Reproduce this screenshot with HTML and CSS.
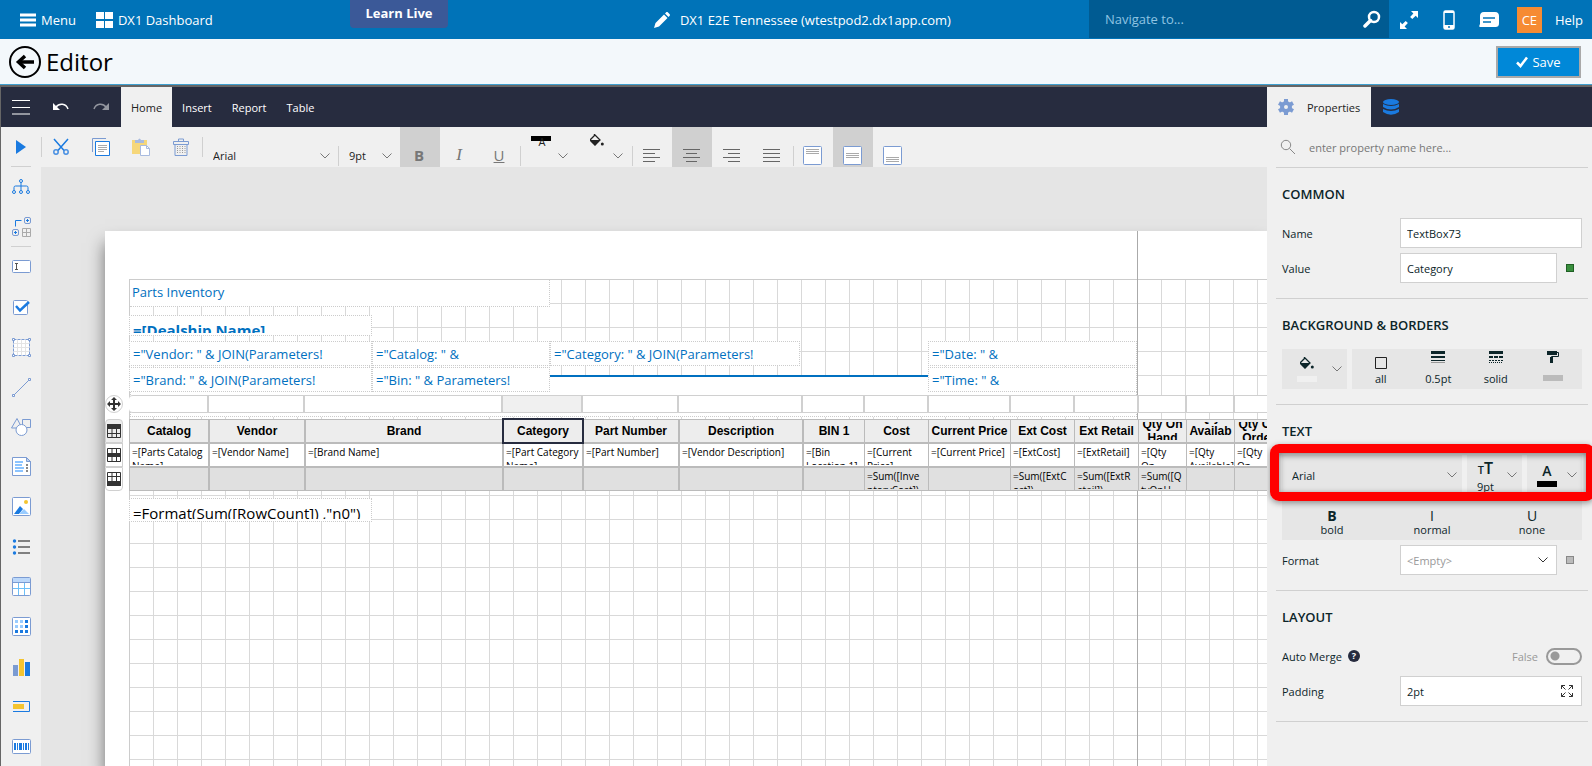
FILE: index.html
```html
<!DOCTYPE html>
<html lang="en">
<head>
    <meta charset="UTF-8">
    <meta name="viewport" content="width=device-width, initial-scale=1.0">
    <title>Editor</title>
    <link rel="stylesheet" href="styles.css">
</head>
<body>
    <header class="topbar">
        <nav class="top-left">
            <a class="top-link" href="#">
                <svg width="16" height="14" viewBox="0 0 16 14"><path d="M0 2h16M0 7h16M0 12h16" stroke="#fff" stroke-width="3"/></svg>
                Menu
            </a>
            <a class="top-link" href="#">
                <svg width="17" height="16" viewBox="0 0 17 16" fill="#fff"><path d="M0 0h8v7H0zM9 0h8v7H9zM0 9h8v7H0zM9 9h8v7H9z"/></svg>
                DX1 Dashboard
            </a>
        </nav>
        <a class="learn" href="#">Learn Live</a>
        <a class="tenant" href="#">
            <svg width="16" height="16" viewBox="0 0 16 16" fill="#fff"><path d="M0 16l1.500-5L10 2.500 13.500 6 5 14.500zM11 1.500l1-1c.7-.7 1.500-.5 2 0L15.500 2c.6.6.6 1.300 0 2l-1 1z"/></svg>
            DX1 E2E Tennessee (wtestpod2.dx1app.com)
        </a>
        <div class="top-right">
            <label class="navigate">
                <input type="text" placeholder="Navigate to..." aria-label="Navigate to">
                <svg width="18" height="18" viewBox="0 0 18 18" fill="none" stroke="#fff"><circle cx="11" cy="7" r="5" stroke-width="2.500"/><path d="M7.500 10.500L2 16" stroke-width="3.500" stroke-linecap="round"/></svg>
            </label>
            <button class="top-icon" aria-label="Full screen"><svg width="20" height="20" viewBox="0 0 20 20" fill="#fff"><path d="M12 1h7v7l-2.300-2.300-3.400 3.400-2.200-2.200 3.300-3.400zM1 12l2.300 2.300 3.400-3.400 2.200 2.200-3.300 3.400L8 19H1z"/></svg></button>
            <button class="top-icon" aria-label="Mobile"><svg width="12" height="20" viewBox="0 0 12 20"><rect x="1" y="1" width="10" height="18" rx="1.500" fill="none" stroke="#fff" stroke-width="1.500"/><path d="M1 15h10v4H1zM1 1h10v2H1z" fill="#fff"/><circle cx="6" cy="17" r="1" fill="#0073b8"/></svg></button>
            <button class="top-icon" aria-label="Messages"><svg width="20" height="16" viewBox="0 0 20 16"><path d="M5 0h11c3 0 4 2 4 4v7c0 3-1 4-4 4H1c-1 0-1-1 0-3V4c0-2 1-4 4-4z" fill="#fff"/><path d="M4 6h12M4 10h8" stroke="#0073b8" stroke-width="1.500"/></svg></button>
            <span class="avatar">CE</span>
            <a href="#">Help</a>
        </div>
    </header>

    <div class="titlebar">
        <a class="back" href="#" aria-label="Back"><svg width="32" height="32" viewBox="0 0 32 32" fill="none" stroke="#000"><circle cx="16" cy="16" r="15" stroke-width="2"/><path d="M9 16h16" stroke-width="3.500"/><path d="M16 10l-6.500 6 6.500 6" stroke-width="3.500"/></svg></a>
        <h1>Editor</h1>
        <button class="save"><svg width="12" height="12" viewBox="0 0 12 12"><path d="M1 6.500L4.500 10 11 1.500" fill="none" stroke="#fff" stroke-width="2.500"/></svg>Save</button>
    </div>

    <div class="designer">
        <main class="main">
            <nav class="tabs">
                <button class="tab-icon" aria-label="Open menu"><svg width="18" height="16" viewBox="0 0 18 16"><path d="M0 1.500h18M0 8.500h18M0 15h18" stroke="#fff"/></svg></button>
                <button class="tab-icon" aria-label="Undo"><svg width="16" height="10" viewBox="0 0 16 10"><path d="M0 1v7h7z" fill="#fff"/><path d="M3 5c3-4 10-4 12 2" fill="none" stroke="#fff" stroke-width="1.500"/></svg></button>
                <button class="tab-icon dim" aria-label="Redo"><svg width="16" height="10" viewBox="0 0 16 10"><path d="M16 1v7H9z" fill="#fff"/><path d="M13 5C10 1 3 1 1 7" fill="none" stroke="#fff" stroke-width="1.500"/></svg></button>
                <button class="tab active">Home</button>
                <button class="tab">Insert</button>
                <button class="tab">Report</button>
                <button class="tab">Table</button>
            </nav>
            <div class="workspace">
                <aside class="toolbox">
                    <button class="tool ruled" aria-label="Preview"><svg width="10" height="14" viewBox="0 0 10 14"><path d="M0 0l10 7-10 7z" fill="#1a7ae0"/></svg></button>
                    <button class="tool" aria-label="Explorer"><svg width="20" height="18" viewBox="0 0 20 18" fill="none" stroke="#1a7ae0"><circle cx="10" cy="3" r="1.500"/><circle cx="3" cy="14" r="1.500"/><circle cx="10" cy="14" r="1.500"/><circle cx="17" cy="14" r="1.500"/><path d="M10 4.500v8M3 12.500v-3q0-1.500 1.500-1.500h11q1.500 0 1.500 1.500v3"/></svg></button>
                    <button class="tool ruled" aria-label="Group editor"><svg width="20" height="20" viewBox="0 0 20 20" fill="none" stroke="#7b9bd2"><path d="M4.500 9.500v-6h6" stroke="#1a7ae0"/><rect x="13.500" y=".5" width="6" height="6" rx="1.500"/><rect x="1.500" y="12.500" width="6" height="6" rx="1.500"/><path d="M15 3.500h3M16.500 2v3M3 15.500h3M4.500 14v3" stroke="#1a7ae0"/><path d="M11.500 11.500h8v8h-8zM15.500 11.500v8M11.500 15.500h8" stroke="#aaa"/></svg></button>
                    <button class="tool" aria-label="Text box"><svg width="20" height="14" viewBox="0 0 20 14"><rect x="1.500" y=".5" width="18" height="12" rx="1" fill="#fff" stroke="#7b9bd2"/><path d="M4 3.500h3M5.500 3.500v6M4 9.500h3" stroke="#555"/></svg></button>
                    <button class="tool" aria-label="Check box"><svg width="18" height="16" viewBox="0 0 18 16"><rect x="1.500" y="1.500" width="14" height="14" rx="1" fill="#fff" stroke="#7b9bd2"/><path d="M4 7l4 4.500L17 3" fill="none" stroke="#1a7ae0" stroke-width="2.500"/></svg></button>
                    <button class="tool" aria-label="Container"><svg width="20" height="20" viewBox="0 0 20 20" fill="#fff" stroke="#7b9bd2"><path d="M2.500 2.500h16v16h-16z" stroke-dasharray="3 1"/><path d="M6.500 3v15M10.500 3v15M14.500 3v15M3 6.500h15M3 10.500h15M3 14.500h15" stroke="#e4e4e4"/><path d="M1.500 1.500h2v2h-2zM17.500 1.500h2v2h-2zM1.500 17.500h2v2h-2zM17.500 17.500h2v2h-2z"/></svg></button>
                    <button class="tool" aria-label="Line"><svg width="20" height="20" viewBox="0 0 20 20" fill="#fff" stroke="#7b9bd2"><path d="M2.500 18.500l16-16"/><path d="M17.500 1.500h2v2h-2zM1.500 17.500h2v2h-2z"/></svg></button>
                    <button class="tool" aria-label="Shape"><svg width="20" height="20" viewBox="0 0 20 20" fill="#f0f0f0" stroke="#7b9bd2"><path d="M.5 11L6 1.500l5 9.500zM11.500 2.500h8v8h-8z"/><circle cx="10.500" cy="13" r="5.500" fill="#fff"/></svg></button>
                    <button class="tool" aria-label="Rich text"><svg width="20" height="20" viewBox="0 0 20 20"><path d="M1.500 .5H15l4.500 4v14h-18z" fill="#fff" stroke="#7b9bd2"/><path d="M15.500 .5v4h4z" fill="#bcd0f0" stroke="#7b9bd2"/><path d="M4 5h8M4 8h7M4 11h9M4 14h8" stroke="#8cc4ff" stroke-width="2"/><path d="M15 8h2M15 11h2M15 14h2" stroke="#888" stroke-width="2"/></svg></button>
                    <button class="tool" aria-label="Image"><svg width="20" height="20" viewBox="0 0 20 20"><rect x="1.500" y=".5" width="18" height="18" rx="1" fill="#fff" stroke="#7b9bd2"/><path d="M3 17l6-8 3 3-4 5z" fill="#1a7ae0"/><path d="M8 17l5-5 5 5z" fill="#99ccff"/><circle cx="15" cy="5" r="2" fill="#f4c430"/></svg></button>
                    <button class="tool" aria-label="List"><svg width="20" height="18" viewBox="0 0 20 18"><path d="M7 3h12M7 9h12M7 15h12" stroke="#808080" stroke-width="2"/><g fill="#1a7ae0"><circle cx="3.500" cy="3" r="1.700"/><circle cx="3.500" cy="9" r="1.700"/><circle cx="3.500" cy="15" r="1.700"/></g></svg></button>
                    <button class="tool" aria-label="Table"><svg width="20" height="20" viewBox="0 0 20 20"><rect x="1.500" y=".5" width="18" height="18" rx="1" fill="#fff" stroke="#7b9bd2"/><path d="M2 1h17v4H2z" fill="#bcd8fa"/><path d="M2 5.500h17" stroke="#7b9bd2"/><path d="M7.500 6v12M13.500 6v12M2 11.500h17" stroke="#6cc0f8"/></svg></button>
                    <button class="tool" aria-label="Tablix"><svg width="20" height="20" viewBox="0 0 20 20"><rect x="1.500" y=".5" width="18" height="18" rx="1" fill="#fff" stroke="#7b9bd2"/><path d="M4 4.500h3M9 4.500h3M4 9.500h3M9 9.500h3" stroke="#99ccff" stroke-width="3"/><path d="M14 4.500h3M14 9.500h3M4 14.500h3M9 14.500h3M14 14.500h3" stroke="#1a7ae0" stroke-width="3"/></svg></button>
                    <button class="tool" aria-label="Chart"><svg width="18" height="18" viewBox="0 0 18 18"><path d="M1 7h5v11H1z" fill="#7b9bd2"/><path d="M7 1h5v17H7z" fill="#f4c430"/><path d="M13 4h5v14h-5z" fill="#1a7ae0"/></svg></button>
                    <button class="tool" aria-label="Bullet"><svg width="18" height="12" viewBox="0 0 18 12"><path d="M1 .5h16.500v10H1" fill="none" stroke="#1a7ae0"/><path d="M1 3h11v5H1z" fill="#f4c430"/></svg></button>
                    <button class="tool" aria-label="Barcode"><svg width="20" height="16" viewBox="0 0 20 16"><rect x="1.500" y=".5" width="18" height="14" rx="1" fill="#fff" stroke="#7b9bd2"/><path d="M4 4v7M10 4v7M15 4v7" stroke="#1a7ae0" stroke-width="2"/><path d="M6.500 4v7M8.500 4v7M12.500 4v7M17.500 4v7" stroke="#1a7ae0"/></svg></button>
                </aside>
                <div class="stage">
                    <div class="toolbar">
                        <div class="group edit">
                            <button class="tool" aria-label="Cut"><svg width="18" height="18" viewBox="0 0 18 18" fill="none" stroke="#1a7ae0" stroke-width="1.500"><path d="M2 1l10.500 12M16 1L5.500 13"/><circle cx="4" cy="14" r="2.200" stroke="#4a90e2"/><circle cx="14" cy="14" r="2.200" stroke="#4a90e2"/></svg></button>
                            <button class="tool" aria-label="Copy"><svg width="18" height="18" viewBox="0 0 18 18" fill="none" stroke="#7b9bd2"><path d="M.5 14V.5H14"/><path d="M3.500 3.500h14v14h-14z" fill="#fff" stroke="#1a7ae0"/><path d="M6 7.500h9M6 9.500h9M6 11.500h9M6 13.500h6" stroke="#aaa"/></svg></button>
                            <button class="tool" aria-label="Paste"><svg width="18" height="20" viewBox="0 0 18 20"><path d="M0 3h15v14H0z" fill="#f6d77a"/><path d="M3 3h3q1.500-3 3 0h3v3H3z" fill="#a9bbdf"/><path d="M8.500 8.500h6l3 3v7h-9z" fill="#fff" stroke="#a9bbdf"/><path d="M14.500 8.500v3h3" fill="none" stroke="#a9bbdf"/></svg></button>
                            <button class="tool" aria-label="Delete"><svg width="16" height="18" viewBox="0 0 16 18" fill="none" stroke="#7b9bd2"><path d="M.5 3.500h15v3H.5zM5.500 3V1h5v2M2 6.500v11h12v-11"/><path d="M4.500 8v8M7 8v8M9.500 8v8M12 8v8" stroke="#999" stroke-dasharray="1 1"/></svg></button>
                        </div>
                        <div class="group font-name low">
                            <select aria-label="Font"><option>Arial</option></select>
                            <svg class="chevron" width="10" height="6" viewBox="0 0 10 6"><path d="M.5 .5L5 5 9.500 .5"/></svg>
                        </div>
                        <div class="group font-size low">
                            <select aria-label="Font size"><option>9pt</option></select>
                            <svg class="chevron" width="10" height="6" viewBox="0 0 10 6"><path d="M.5 .5L5 5 9.500 .5"/></svg>
                        </div>
                        <div class="group low">
                            <button class="tool letter on"><b>B</b></button>
                            <button class="tool letter"><i>I</i></button>
                            <button class="tool letter"><u>U</u></button>
                        </div>
                        <div class="group low colors">
                            <button class="color-tool" aria-label="Text color"><span class="ink"></span><span class="ink-letter">A</span></button>
                            <svg class="chevron" width="10" height="6" viewBox="0 0 10 6"><path d="M.5 .5L5 5 9.500 .5"/></svg>
                            <button class="color-tool bucket" aria-label="Background color"><svg width="14" height="12" viewBox="0 0 14 12"><path d="M4 0l6 6-5 5-5-5 5-5" fill="none" stroke="#222" stroke-width="1.300"/><path d="M0 6h10l-5 5.500z" fill="#222"/><circle cx="12.300" cy="10" r="1.500" fill="#222"/></svg></button>
                            <svg class="chevron" width="10" height="6" viewBox="0 0 10 6"><path d="M.5 .5L5 5 9.500 .5"/></svg>
                        </div>
                        <div class="group low aligns">
                            <button class="tool" aria-label="Align left"><svg width="18" height="14" viewBox="0 0 18 14" stroke="#666"><path d="M0 .5h17M0 4.500h12M0 8.500h17M0 12.500h12"/></svg></button>
                            <button class="tool on" aria-label="Align center"><svg width="18" height="14" viewBox="0 0 18 14" stroke="#666"><path d="M0 .5h17M3 4.500h11M0 8.500h17M3 12.500h11"/></svg></button>
                            <button class="tool" aria-label="Align right"><svg width="18" height="14" viewBox="0 0 18 14" stroke="#666"><path d="M0 .5h17M5 4.500h12M0 8.500h17M5 12.500h12"/></svg></button>
                            <button class="tool" aria-label="Justify"><svg width="18" height="14" viewBox="0 0 18 14" stroke="#666"><path d="M0 .5h17M0 4.500h17M0 8.500h17M0 12.500h17"/></svg></button>
                        </div>
                        <div class="group low">
                            <button class="tool" aria-label="Align top"><svg width="20" height="20" viewBox="0 0 20 20"><rect x=".5" y=".5" width="18" height="18" rx="1" fill="#fff" stroke="#7b9bd2"/><path d="M3 3.500h13M3 5.500h13M3 7.500h13" stroke="#aaa"/></svg></button>
                            <button class="tool on" aria-label="Align middle"><svg width="20" height="20" viewBox="0 0 20 20"><rect x=".5" y=".5" width="18" height="18" rx="1" fill="#fff" stroke="#7b9bd2"/><path d="M3 7.500h13M3 9.500h13M3 11.500h13" stroke="#aaa"/></svg></button>
                            <button class="tool" aria-label="Align bottom"><svg width="20" height="20" viewBox="0 0 20 20"><rect x=".5" y=".5" width="18" height="18" rx="1" fill="#fff" stroke="#7b9bd2"/><path d="M3 11.500h13M3 13.500h13M3 15.500h13" stroke="#aaa"/></svg></button>
                        </div>
                    </div>
                    <div class="canvas">
                        <div class="sheet">
                            <div class="margin-line"></div>
                            <div class="grid">
                                <div class="box title">Parts Inventory</div>
                                <div class="box dealer"><div>=[Dealship Name]</div></div>
                                <div class="box row1 c1">="Vendor: " &amp; JOIN(Parameters!</div>
                                <div class="box row1 c2">="Catalog: " &amp;</div>
                                <div class="box row1 c3">="Category: " &amp; JOIN(Parameters!</div>
                                <div class="box row1 c4">="Date: " &amp;</div>
                                <div class="backing"></div>
                                <div class="rule"></div>
                                <div class="box row2 c1">="Brand: " &amp; JOIN(Parameters!</div>
                                <div class="box row2 c2">="Bin: " &amp; Parameters!</div>
                                <div class="box row2 c4">="Time: " &amp;</div>
                                <div class="box count"><div>=Format(Sum([RowCount]) ,"n0")</div></div>

                                <div class="tablix">
                                    <div class="col-handles">
                                        <span class="w80"></span><span class="w96"></span><span class="w198"></span><span class="w80 picked"></span><span class="w96"></span><span class="w124"></span><span class="w62"></span><span class="w64"></span><span class="w82"></span><span class="w64"></span><span class="w64"></span><span class="w48"></span><span class="w48"></span>
                                    </div>
                                    <table>
                                        <colgroup>
                                            <col class="w80"><col class="w96"><col class="w198"><col class="w80"><col class="w96"><col class="w124"><col class="w62"><col class="w64"><col class="w82"><col class="w64"><col class="w64"><col class="w48"><col class="w48"><col class="w48">
                                        </colgroup>
                                        <thead>
                                            <tr>
                                                <th><div>Catalog</div></th>
                                                <th><div>Vendor</div></th>
                                                <th><div>Brand</div></th>
                                                <th class="selected"><div>Category</div></th>
                                                <th><div>Part Number</div></th>
                                                <th><div>Description</div></th>
                                                <th><div>BIN 1</div></th>
                                                <th><div>Cost</div></th>
                                                <th><div>Current Price</div></th>
                                                <th><div>Ext Cost</div></th>
                                                <th><div>Ext Retail</div></th>
                                                <th><div>Qty On<br>Hand</div></th>
                                                <th><div>Qty<br>Availab<br>le</div></th>
                                                <th><div>Qty On<br>Order</div></th>
                                            </tr>
                                        </thead>
                                        <tbody>
                                            <tr>
                                                <td><div>=[Parts Catalog<br>Name]</div></td>
                                                <td><div>=[Vendor Name]</div></td>
                                                <td><div>=[Brand Name]</div></td>
                                                <td><div>=[Part Category<br>Name]</div></td>
                                                <td><div>=[Part Number]</div></td>
                                                <td><div>=[Vendor Description]</div></td>
                                                <td><div>=[Bin<br>Location 1]</div></td>
                                                <td><div>=[Current<br>Price]</div></td>
                                                <td><div>=[Current Price]</div></td>
                                                <td><div>=[ExtCost]</div></td>
                                                <td><div>=[ExtRetail]</div></td>
                                                <td><div>=[Qty<br>On</div></td>
                                                <td><div>=[Qty<br>Available]</div></td>
                                                <td><div>=[Qty<br>On</div></td>
                                            </tr>
                                        </tbody>
                                        <tfoot>
                                            <tr>
                                                <td></td><td></td><td></td><td></td><td></td><td></td><td></td>
                                                <td><div>=Sum([Inve<br>ntoryCost])</div></td>
                                                <td></td>
                                                <td><div>=Sum([ExtC<br>ost])</div></td>
                                                <td><div>=Sum([ExtR<br>etail])</div></td>
                                                <td><div>=Sum([Q<br>tyOnH</div></td>
                                                <td></td><td></td>
                                            </tr>
                                        </tfoot>
                                    </table>
                                </div>
                                <div class="row-handles">
                                    <button class="move" aria-label="Move"><svg width="14" height="14" viewBox="0 0 14 14" fill="#333"><path d="M6 3h2v3h3V4l3 3-3 3V8H8v3h2l-3 3-3-3h2V8H3v2L0 7l3-3v2h3V3H4l3-3 3 3z"/></svg></button>
                                    <button aria-label="Header row"><svg width="14" height="14" viewBox="0 0 14 14"><path d="M0 0h14v5H0z" fill="#333"/><path d="M.5 5v8.500h13V5M5 5v8M9.500 5v8M0 9.500h14" fill="none" stroke="#333"/></svg></button>
                                    <button aria-label="Detail row"><svg width="14" height="14" viewBox="0 0 14 14"><path d="M0 5h14v4H0z" fill="#333"/><path d="M.5 .5h13v13H.5zM5 0v14M9.500 0v14" fill="none" stroke="#333"/></svg></button>
                                    <button aria-label="Footer row"><svg width="14" height="14" viewBox="0 0 14 14"><path d="M0 9h14v5H0z" fill="#333"/><path d="M.5 9V.5h13V9M5 0v9M9.500 0v9M0 4.500h14" fill="none" stroke="#333"/></svg></button>
                                </div>
                            </div>
                        </div>
                    </div>
                </div>
            </div>
        </main>

        <aside class="panel">
            <nav class="tabs">
                <button class="tab active props"><svg width="16" height="16" viewBox="0 0 16 16"><circle cx="8" cy="8" r="4" fill="none" stroke="#7b9bd2" stroke-width="4"/><path d="M8 0v3M8 13v3M1 4l2.700 1.500M12.300 10.500L15 12M1 12l2.700-1.500M12.300 5.500L15 4" stroke="#7b9bd2" stroke-width="4"/></svg>Properties</button>
                <button class="tab-icon" aria-label="Data"><svg width="16" height="16" viewBox="0 0 16 16" fill="#1a7ae0"><ellipse cx="8" cy="3" rx="8" ry="3"/><path d="M0 5q8 4 16 0v3q-8 5-16 0zM0 10q8 4 16 0v3q-8 5.500-16 0z"/></svg></button>
            </nav>
            <label class="filter">
                <svg width="16" height="16" viewBox="0 0 16 16" fill="none" stroke="#888"><circle cx="6" cy="6" r="4.700"/><path d="M9.500 9.500L15 15"/></svg>
                <input type="text" placeholder="enter property name here..." aria-label="Property name">
            </label>

            <section>
                <h2>COMMON</h2>
                <div class="field">
                    <label for="name">Name</label>
                    <input id="name" type="text" value="TextBox73">
                </div>
                <div class="field">
                    <label for="value">Value</label>
                    <input id="value" type="text" value="Category">
                    <button class="marker green" aria-label="Value options"></button>
                </div>
            </section>

            <section>
                <h2>BACKGROUND &amp; BORDERS</h2>
                <div class="buttons">
                    <button class="pad fill">
                        <span class="stack"><svg width="14" height="12" viewBox="0 0 14 12"><path d="M4 0l6 6-5 5-5-5 5-5" fill="none" stroke="#0c2529" stroke-width="1.300"/><path d="M0 6h10l-5 5.500z" fill="#0c2529"/><circle cx="12.300" cy="10" r="1.500" fill="#0c2529"/></svg><span class="swatch light"></span></span>
                        <svg class="chevron" width="10" height="6" viewBox="0 0 10 6"><path d="M.5 .5L5 5 9.500 .5"/></svg>
                    </button>
                    <div class="pad wide borders">
                        <button class="all"><svg width="12" height="12" viewBox="0 0 12 12"><path d="M.5 .5h11v11H.5z" fill="none" stroke="#222"/></svg>all</button>
                        <button><svg width="14" height="12" viewBox="0 0 14 12" stroke="#0c2529"><path d="M0 1.500h14" stroke-width="3"/><path d="M0 6h14" stroke-width="2"/><path d="M0 9.500h14"/><path d="M0 11.500h14" stroke="#999"/></svg>0.5pt</button>
                        <button><svg width="14" height="12" viewBox="0 0 14 12" stroke="#0c2529"><path d="M0 1.500h14" stroke-width="3"/><path d="M0 6h14" stroke-width="2" stroke-dasharray="4 1"/><path d="M0 9.500h14" stroke-dasharray="2 1"/><path d="M0 11.500h14" stroke-dasharray="1 1"/></svg>solid</button>
                        <button aria-label="Border color"><svg width="12" height="12" viewBox="0 0 12 12"><path d="M0 0h10v4H0zM3 6h3v6H3z" fill="#0c2529"/><path d="M10 1.500h1.500v4h-7V8" fill="none" stroke="#0c2529"/></svg><span class="swatch grey"></span></button>
                    </div>
                </div>
            </section>

            <section class="text-section">
                <h2>TEXT</h2>
                <div class="buttons">
                    <div class="pad family">
                        <select aria-label="Font family"><option>Arial</option></select>
                        <svg class="chevron" width="10" height="6" viewBox="0 0 10 6"><path d="M.5 .5L5 5 9.500 .5"/></svg>
                    </div>
                    <button class="pad small">
                        <span class="stack"><span class="tt"><small>T</small>T</span><span>9pt</span></span>
                        <svg class="chevron" width="10" height="6" viewBox="0 0 10 6"><path d="M.5 .5L5 5 9.500 .5"/></svg>
                    </button>
                    <button class="pad small">
                        <span class="stack"><span class="cap">A</span><span class="swatch black"></span></span>
                        <svg class="chevron" width="10" height="6" viewBox="0 0 10 6"><path d="M.5 .5L5 5 9.500 .5"/></svg>
                    </button>
                </div>
                <div class="buttons">
                    <div class="pad wide styles">
                        <button><b>B</b>bold</button>
                        <button><span>I</span>normal</button>
                        <button><span>U</span>none</button>
                    </div>
                </div>
                <div class="field">
                    <label for="format">Format</label>
                    <div class="combo">
                        <select id="format"><option>&lt;Empty&gt;</option></select>
                        <svg class="chevron" width="10" height="6" viewBox="0 0 10 6"><path d="M.5 .5L5 5 9.500 .5"/></svg>
                    </div>
                    <button class="marker" aria-label="Format options"></button>
                </div>
                <div class="highlight"></div>
            </section>

            <section>
                <h2>LAYOUT</h2>
                <div class="field">
                    <label class="merge" for="merge">Auto Merge <span class="help">?</span></label>
                    <span class="state">False</span>
                    <input id="merge" class="toggle" type="checkbox">
                </div>
                <div class="field">
                    <label for="padding">Padding</label>
                    <div class="combo">
                        <input id="padding" type="text" value="2pt">
                        <svg class="expand" width="12" height="12" viewBox="0 0 12 12" fill="none"><path d="M.5 4V.5H4M8 .5h3.500V4M11.500 8v3.500H8M4 11.500H.5V8M.5 .5l4 4M11.500 .5l-4 4M11.500 11.500l-4-4M.5 11.500l4-4"/></svg>
                    </div>
                </div>
            </section>
        </aside>
    </div>
</body>
</html>
```
FILE: styles.css
```css
* {
    box-sizing: border-box;
}
body {
    font-family: "Open Sans", sans-serif;
    font-size: 11px;
    color: #222;
    margin: 0;
    height: 100vh;
    display: flex;
    flex-direction: column;
    overflow: hidden;
}
button, input, select {
    font: inherit;
    color: inherit;
    background: none;
    border: 0;
    border-radius: 0;
    margin: 0;
    padding: 0;
    outline: none;
    appearance: none;
}
button {
    cursor: pointer;
}
a {
    color: inherit;
    text-decoration: none;
}
svg {
    display: block;
    flex: none;
}

/* top bar */
.topbar {
    display: flex;
    height: 39px;
    flex: none;
    background: #0073b8;
    color: #fff;
    font-size: 13px;
}
.top-left {
    display: flex;
    align-items: center;
    gap: 20px;
    padding-left: 20px;
    width: 350px;
    flex: none;
}
.top-link {
    display: flex;
    align-items: center;
    gap: 5px;
}
.learn {
    width: 98px;
    height: 28px;
    line-height: 26px;
    background: #3b5998;
    border-radius: 0 0 4px 4px;
    font-weight: bold;
    text-align: center;
}
.tenant {
    display: flex;
    align-items: center;
    gap: 10px;
    margin: 0 138px 0 auto;
}
.top-right {
    display: flex;
    align-items: center;
    padding-right: 9px;
}
.navigate {
    display: flex;
    align-items: center;
    align-self: flex-start;
    width: 300px;
    height: 38px;
    padding: 0 8px 0 16px;
    background: #005b92;
}
.navigate input {
    flex: 1;
    min-width: 0;
}
.navigate input::placeholder {
    color: #8fc4e2;
}
.top-icon {
    width: 40px;
    display: flex;
    justify-content: center;
}
.avatar {
    width: 25px;
    height: 26px;
    line-height: 26px;
    margin: 0 13px 0 8px;
    background: #f68b33;
    text-align: center;
}

/* page title */
.titlebar {
    display: flex;
    align-items: center;
    gap: 5px;
    height: 46px;
    flex: none;
    padding: 0 11px 0 9px;
    background: #f3f8fb;
    border-bottom: 1px solid #3fa0cf;
    color: #000;
}
.titlebar h1 {
    margin: 0;
    font-size: 24px;
    font-weight: normal;
}
.save {
    display: flex;
    align-items: center;
    justify-content: center;
    gap: 4px;
    width: 85px;
    height: 32px;
    margin-left: auto;
    background: #0088d8;
    border: 2px solid #a9a9a9;
    color: #fff;
    font-size: 13px;
}

/* designer frame */
.designer {
    flex: 1;
    min-height: 0;
    display: flex;
    background: #f0f0f0;
    border-top: 2px solid #666;
    border-left: 1px solid #666;
}
.main {
    flex: 1;
    min-width: 0;
    display: flex;
    flex-direction: column;
}
.tabs {
    display: flex;
    height: 40px;
    flex: none;
    background: #272c3f;
}
.tab {
    padding: 0 10px;
    color: #fff;
}
.tab.active {
    background: #f0f0f0;
    color: #222;
}
.tab-icon {
    width: 40px;
    display: flex;
    align-items: center;
    justify-content: center;
}
.tab-icon.dim {
    opacity: 0.5;
}
.workspace {
    flex: 1;
    min-height: 0;
    display: flex;
}
.toolbox {
    width: 40px;
    flex: none;
    overflow: hidden;
}
.tool {
    display: flex;
    align-items: center;
    justify-content: center;
    width: 40px;
    height: 40px;
}
.ruled {
    background: linear-gradient(#d0d0d0, #d0d0d0) center bottom / 20px 1px no-repeat;
}
.stage {
    flex: 1;
    min-width: 0;
    display: flex;
    flex-direction: column;
}

/* toolbar */
.toolbar {
    display: flex;
    height: 40px;
    flex: none;
}
.group {
    position: relative;
    display: flex;
    align-items: center;
}
.group::before {
    content: "";
    position: absolute;
    left: 0;
    top: 10px;
    width: 1px;
    height: 20px;
    background: #d0d0d0;
}
.low::before {
    top: 19px;
}
.low .tool {
    padding-top: 17px;
}
.on {
    background: #d0d0d0;
}
.low .letter {
    padding: 15px 2px 0 0;
    font-size: 15px;
    color: #777;
}
.letter i {
    font-family: "Liberation Serif", serif;
    font-size: 17px;
}
.edit {
    width: 161px;
}
.edit + .group::before {
    top: 10px;
}
.font-name {
    width: 136px;
}
.font-size {
    width: 62px;
}
.font-name, .font-size {
    padding: 17px 8px 0 11px;
}
.group select {
    flex: 1;
    min-width: 0;
}
.chevron {
    fill: none;
    stroke: #777;
    pointer-events: none;
}
.colors {
    width: 112px;
    padding-left: 11px;
    gap: 7px;
}
.colors .chevron {
    margin-top: 17px;
}
.color-tool {
    align-self: flex-start;
    width: 20px;
    padding-top: 7px;
}
.bucket {
    width: 31px;
    padding-left: 15px;
}
.ink {
    display: block;
    width: 20px;
    height: 5px;
    margin-top: 2px;
    background: #000;
}
.ink-letter {
    display: block;
    width: 22px;
    margin-top: -4px;
    line-height: 10px;
    text-align: center;
}
.aligns {
    width: 161px;
}

/* report sheet */
.canvas {
    flex: 1;
    min-height: 0;
    padding: 64px 0 0 64px;
    background: #e5e5e5;
    overflow: hidden;
}
.sheet {
    position: relative;
    height: 100%;
    padding: 48px 0 0 24px;
    background: #fff;
    box-shadow: 0 12px 16px rgba(0, 0, 0, 0.5);
}
.grid {
    position: relative;
    height: 100%;
    border-top: 1px solid #ccc;
    border-left: 1px solid #ccc;
    background-image: linear-gradient(to right, #d9d9d9 1px, transparent 1px), linear-gradient(#d9d9d9 1px, transparent 1px);
    background-size: 24px 24px;
    background-position: -1px -1px;
}
.margin-line {
    position: absolute;
    left: 1032px;
    top: 0;
    bottom: 0;
    width: 1px;
    background: #aaa;
    z-index: 1;
}
.box {
    position: absolute;
    padding: 0 3px;
    background: #fff;
    border: 1px dotted #ccc;
    color: #0070c0;
    font-size: 13px;
    white-space: nowrap;
    overflow: hidden;
}
.box div {
    overflow: hidden;
}
.title {
    left: 0;
    top: 0;
    width: 420px;
    height: 27px;
    line-height: 25px;
    border-top: 0;
    border-left: 0;
    padding: 0 2px;
}
.dealer {
    left: -1px;
    top: 35px;
    width: 243px;
    height: 21px;
    font-size: 15px;
    line-height: 28px;
    font-weight: bold;
}
.dealer div {
    height: 17px;
}
.row1 {
    top: 61px;
    height: 25px;
    line-height: 25px;
}
.row2 {
    top: 87px;
    height: 25px;
    line-height: 25px;
}
.c1 {
    left: -1px;
    width: 243px;
}
.c2 {
    left: 242px;
    width: 178px;
}
.c3 {
    left: 420px;
    width: 250px;
}
.c4 {
    left: 798px;
    width: 209px;
}
.backing {
    position: absolute;
    left: 0;
    top: 96px;
    width: 1007px;
    height: 41px;
    background: #fff;
    border: 1px dotted #ccc;
    border-top: 0;
}
.rule {
    position: absolute;
    left: 420px;
    top: 95px;
    width: 378px;
    height: 2px;
    background: #0070c0;
}
.count {
    left: -1px;
    top: 218px;
    width: 243px;
    height: 24px;
    line-height: 28px;
    color: #000;
    font-size: 15px;
}
.count div {
    height: 20px;
}

/* tablix */
.tablix {
    position: absolute;
    left: -1px;
    right: 0;
    top: 115px;
    overflow: hidden;
    z-index: 2;
}
.col-handles {
    display: flex;
    width: 1202px;
    height: 18px;
    margin-bottom: 6px;
    background: #fff;
    border: 1px solid #d0d0d0;
    border-left: 0;
    border-radius: 4px 0 0 4px;
}
.col-handles span {
    flex: none;
    border-right: 2px solid #d0d0d0;
}
.col-handles .picked {
    background: #f0f0f0;
}
.w48 { width: 48px; }
.w62 { width: 62px; }
.w64 { width: 64px; }
.w80 { width: 80px; }
.w82 { width: 82px; }
.w96 { width: 96px; }
.w124 { width: 124px; }
.w198 { width: 198px; }
table {
    table-layout: fixed;
    width: 1154px;
    border-collapse: separate;
    border-spacing: 0;
    color: #000;
}
th, td {
    height: 24px;
    padding: 0;
    background: #fff;
    border: 1px solid #bbb;
    vertical-align: top;
}
th:nth-child(n+8), td:nth-child(n+8) {
    border-left: 0;
}
th {
    background: #ededed;
    font-family: "Liberation Sans", sans-serif;
    font-size: 12px;
    line-height: 14px;
}
th div {
    display: flex;
    align-items: center;
    justify-content: center;
    height: 18px;
    margin: 2px 0;
    overflow: hidden;
}
th.selected {
    outline: 2px solid #272c3f;
    outline-offset: -1px;
}
td div {
    height: 20px;
    margin: 1px 0;
    padding-left: 2px;
    font-size: 10px;
    line-height: 14px;
    white-space: nowrap;
    overflow: hidden;
}
tfoot td {
    background: #e0e0e0;
}
.row-handles {
    position: absolute;
    left: -25px;
    top: 115px;
    width: 18px;
    z-index: 2;
}
.row-handles button {
    display: flex;
    align-items: center;
    justify-content: center;
    width: 18px;
    height: 24px;
    background: #fff;
    border: 1px solid #d0d0d0;
}
.row-handles .move {
    height: 18px;
    margin-bottom: 6px;
    border-radius: 50%;
}
.row-handles .move + button {
    background: #ededed;
    border-radius: 4px 4px 0 0;
}
.row-handles button:last-child {
    border-radius: 0 0 4px 4px;
}

/* property panel */
.panel {
    width: 325px;
    flex: none;
    color: #0c2529;
    overflow: hidden;
}
.props {
    display: flex;
    align-items: center;
    gap: 13px;
    width: 104px;
    padding: 0 11px;
}
.filter {
    display: flex;
    align-items: center;
    gap: 13px;
    height: 41px;
    margin: 0 4px 0 9px;
    padding-left: 4px;
    border-bottom: 1px solid #d0d0d0;
}
.filter input {
    flex: 1;
}
.filter input::placeholder {
    color: #777;
}
.panel section {
    position: relative;
    display: flex;
    flex-direction: column;
    gap: 5px;
    margin: 0 4px 0 9px;
    padding: 16px 6px 15px;
    border-bottom: 1px solid #d0d0d0;
}
.panel h2 {
    margin: 0 0 9px;
    font-size: 13px;
    line-height: 20px;
    font-weight: 600;
}
.field {
    display: flex;
    align-items: center;
    height: 30px;
}
.field label {
    width: 118px;
}
.field input[type="text"], .combo select {
    flex: 1;
    min-width: 0;
    height: 30px;
    padding: 0 6px;
    background: #fff;
    border: 1px solid #d0d0d0;
}
.combo {
    flex: 1;
    display: flex;
    align-items: center;
    position: relative;
}
.combo select {
    color: #999;
}
.combo svg {
    position: absolute;
    right: 9px;
    stroke: #333;
}
.marker {
    width: 8px;
    height: 8px;
    margin: 0 8px 0 9px;
    background: #bbb;
    border: 1px solid #888;
}
.marker.green {
    background: #388e3c;
    border-color: #1f5f24;
}
.buttons {
    display: flex;
    gap: 5px;
    height: 40px;
}
.pad {
    display: flex;
    align-items: center;
    background: #e6e6e6;
}
.fill {
    width: 65px;
    padding: 0 5px 0 15px;
    justify-content: space-between;
}
.stack {
    display: flex;
    flex-direction: column;
    align-items: center;
    gap: 7px;
}
.swatch {
    width: 20px;
    height: 6px;
}
.light {
    background: #f0f0f0;
}
.grey {
    margin: 3px 0 5px;
    background: #bbb;
}
.black {
    background: #000;
}
.wide {
    flex: 1;
}
.wide button {
    flex: 1;
    height: 40px;
    padding-bottom: 3px;
    display: flex;
    flex-direction: column;
    align-items: center;
    justify-content: flex-end;
    line-height: 14px;
}
.borders button {
    gap: 9px;
}
.borders .all {
    gap: 3px;
}
.styles b, .styles span {
    font-size: 14px;
}
.family {
    width: 180px;
    padding: 0 5px 0 10px;
}
.family select {
    flex: 1;
}
.small {
    width: 55px;
    padding: 0 5px 0 10px;
    justify-content: space-between;
}
.small .stack {
    gap: 3px;
    line-height: 14px;
}
.tt, .cap {
    font-size: 16px;
    font-weight: 600;
}
.tt {
    margin-top: 4px;
}
.cap {
    font-size: 14px;
}
.tt small {
    font-size: 11px;
}
.highlight {
    position: absolute;
    left: -6px;
    right: -7px;
    top: 39px;
    height: 57px;
    border: 9px solid #f00;
    border-radius: 9px;
    box-shadow: 0 2px 6px rgba(0, 0, 0, 0.4), inset 0 2px 6px rgba(0, 0, 0, 0.5);
    pointer-events: none;
}
.field .merge {
    width: auto;
    display: flex;
    align-items: center;
    gap: 6px;
}
.help {
    width: 12px;
    height: 12px;
    line-height: 12px;
    background: #272c3f;
    border-radius: 50%;
    color: #fff;
    font-size: 9px;
    font-weight: bold;
    text-align: center;
}
.state {
    margin-left: auto;
    margin-right: 8px;
    color: #999;
}
.toggle {
    width: 36px;
    height: 17px;
    border: 2px solid #999;
    border-radius: 9px;
    background: radial-gradient(circle at 7px 6px, #999 4px, transparent 5px);
}
```
